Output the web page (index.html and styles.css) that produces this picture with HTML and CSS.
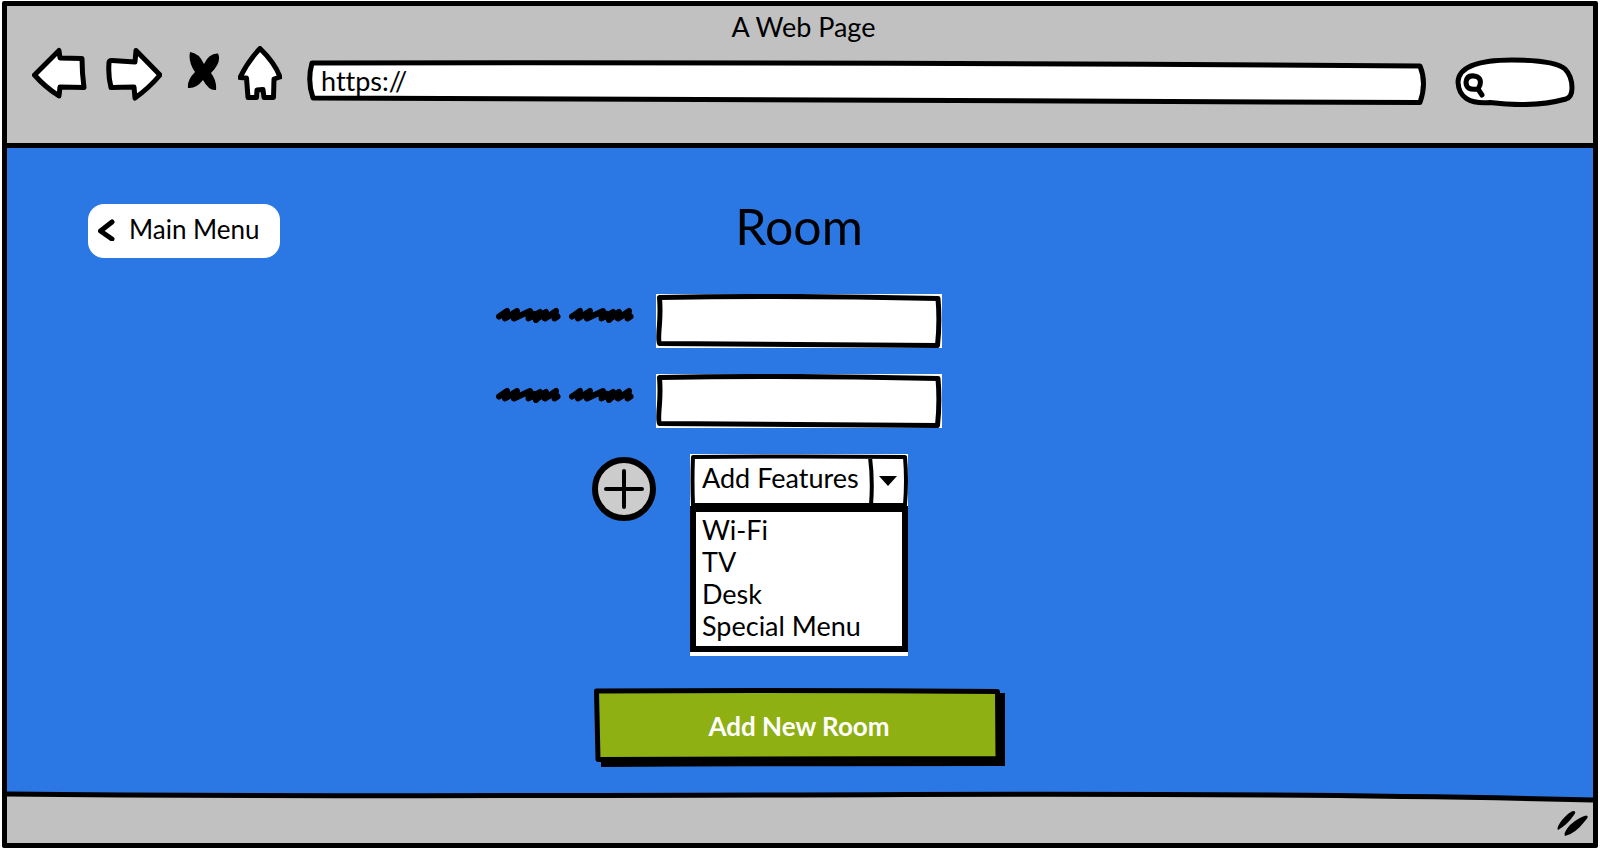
FILE: index.html
```html
<!DOCTYPE html>
<html lang="en">
<head>
<meta charset="utf-8">
<title>A Web Page</title>
<link rel="stylesheet" href="styles.css">
</head>
<body>
<svg class="defs" aria-hidden="true">
  <symbol id="scribble" viewBox="0 0 65 16">
    <path class="scrawl" d="M3 9.500 11 4 9 11.500 21 4 18 11.500 34 4 32.500 11.500 44 5 40 12.500 50 5 49 11.500 60 4 58.500 11.500 61.500 9.500"/>
    <path class="scrawl" d="M34 10 38 7 40 13 45 8 49 11 55 8"/>
  </symbol>
  <symbol id="field" viewBox="0 0 286 54" preserveAspectRatio="none">
    <path d="M3.500 3.500Q140 1 282 4.500Q284 28 281.500 51.500Q150 50 3.500 49.500Q2 47 3.500 30Q4.500 16 3.500 3.500Z"/>
  </symbol>
</svg>

<div class="browser">
  <header class="chrome">
    <div class="page-title">A Web Page</div>
    <div class="toolbar">
      <button class="tool" aria-label="Back">
        <svg class="outline" width="56" height="56" viewBox="0 0 56 56"><path d="M2.500 29 27 4.500 28 12 50 12.500Q50 27 52 41.500L28 41 27 50Q13 41 2.500 29Z"/></svg>
      </button>
      <button class="tool" aria-label="Forward">
        <svg class="outline" width="56" height="56" viewBox="0 0 56 56"><path d="M3 17Q3 14.500 6 14.500L29 16 30 4.500 54 29Q43 42 29 52L28 41Q16 41 5 41.500Q2 30 3 17Z"/></svg>
      </button>
      <button class="tool" aria-label="Stop">
        <svg width="40" height="56" viewBox="0 0 40 56"><path d="M10 6Q19 7 24 18Q29 7 38 7.500Q42 16 31 27Q37 35 36 44Q29 45 23 34Q16 43 8 42Q7 34 15 26Q8 16 10 6Z"/></svg>
      </button>
      <button class="tool" aria-label="Home">
        <svg class="outline" width="44" height="56" viewBox="0 0 44 56"><path d="M22 2.500Q37 17 42 31L36 33 35.500 51.500 26 51.500 25 43.500 19 44 18.500 51.500 10 51.500 8.500 32 2 31.500Q10 15 22 2.500Z"/></svg>
      </button>
      <div class="address">
        <svg class="frame" viewBox="0 0 1120 46" preserveAspectRatio="none" aria-hidden="true"><path d="M5 4Q560 3 1113 7Q1120 24 1113 43.500Q560 41 6 39Q0 22 5 4Z"/></svg>
        <input type="text" value="https://" aria-label="Address">
      </div>
      <div class="search">
        <svg class="frame" viewBox="0 0 120 50" aria-hidden="true"><path d="M3 25Q4 3 57 3Q100 3 110 12Q117 19 117 31Q117 40 111 42Q78 51 35 45.500Q4 48 3 25Z"/><path class="lens" d="M23 32Q11 34 11 25Q12 18 19 19Q27 20 25 28L23 32 27 38"/></svg>
        <input type="search" aria-label="Search">
      </div>
    </div>
  </header>

  <main class="page">
    <div class="heading">
      <a class="back" href="#menu">
        <svg width="18" height="24" viewBox="0 0 18 24" aria-hidden="true"><path d="M14 5 2.500 14 14 22"/></svg>
        Main Menu
      </a>
      <h1>Room</h1>
    </div>

    <form class="form">
      <label class="lead words" for="field-one" aria-label="First field">
        <svg width="65" height="16"><use href="#scribble"/></svg>
        <svg width="65" height="16"><use href="#scribble"/></svg>
      </label>
      <div class="box">
        <svg class="frame" aria-hidden="true"><use href="#field"/></svg>
        <input id="field-one" type="text">
      </div>

      <label class="lead words" for="field-two" aria-label="Second field">
        <svg width="65" height="16"><use href="#scribble"/></svg>
        <svg width="65" height="16"><use href="#scribble"/></svg>
      </label>
      <div class="box">
        <svg class="frame" aria-hidden="true"><use href="#field"/></svg>
        <input id="field-two" type="text">
      </div>

      <button class="lead plus" type="button" aria-label="Add">
        <svg width="64" height="64" viewBox="0 0 64 64"><circle cx="32" cy="32" r="29"/><path d="M32 14V50M14 32H50"/></svg>
      </button>
      <div class="features">
        <div class="combo">
          <svg class="frame" viewBox="0 0 218 52" preserveAspectRatio="none" aria-hidden="true"><path d="M3 3Q110 2 215 3Q217 26 215 51H3Q2 26 3 3ZM180 3Q183 26 181 51"/><path class="caret" d="M189 22H207L198 32Z"/></svg>
          <select aria-label="Features"><option>Add Features</option></select>
        </div>
        <ul class="options">
          <li>Wi-Fi</li>
          <li>TV</li>
          <li>Desk</li>
          <li>Special Menu</li>
        </ul>
      </div>

      <button class="submit" type="submit">
        <svg class="frame" viewBox="0 0 411 80" preserveAspectRatio="none" aria-hidden="true"><path class="shade" d="M7 6 411 5V78Q200 78 7 79Z"/><path class="face" d="M2.500 3Q200 2 403.500 3.500L404 70.500Q200 71 4 71.500Z"/></svg>
        <span>Add New Room</span>
      </button>
    </form>
  </main>

  <footer class="status">
    <svg class="rule" viewBox="0 0 1586 12" preserveAspectRatio="none" aria-hidden="true"><path class="sky" d="M0 0H1586V8Q1350 2 1000 2.500Q300 4 0 2Z"/><path class="line" d="M0 3Q300 6 900 3.500Q1300 2 1586 9"/></svg>
    <svg class="grip" width="32" height="28" viewBox="0 0 32 28" aria-hidden="true"><path d="M1 20Q-1 18 5 10Q12 2 16 1Q20 1 17 5Q10 15 1 20ZM8 26Q6 23 13 15Q22 7 29 5.500Q33 6 28 11Q18 24 8 26Z"/></svg>
  </footer>
</div>
</body>
</html>
```

FILE: styles.css
```css
* { box-sizing: border-box; }

body {
  margin: 0;
  background: #fff;
  color: #000;
  font: 27px/32px Lato, "Open Sans", sans-serif;
  font-variant-ligatures: none;
}

button, input, select {
  margin: 0;
  padding: 0;
  border: 0;
  border-radius: 0;
  background: none;
  color: inherit;
  font: inherit;
  font-variant-ligatures: none;
  outline: 0;
  appearance: none;
}

svg {
  display: block;
  fill: none;
  stroke: #000;
  stroke-width: 5px;
  stroke-linecap: round;
  stroke-linejoin: round;
}

.defs {
  position: absolute;
  width: 0;
  height: 0;
}

.scrawl { stroke-width: 6px; }

.frame {
  position: absolute;
  inset: 0;
  width: 100%;
  height: 100%;
  fill: #fff;
}

.browser {
  display: flex;
  flex-direction: column;
  min-height: calc(100vh - 3px);
  margin: 1px 2px 2px;
  border: 5px solid #000;
  border-radius: 2px;
}

/* Browser chrome */
.chrome {
  padding: 5px 18px 36px 25px;
  border-bottom: 5px solid #000;
  background: #c1c1c1;
}

.page-title {
  text-align: center;
}

.toolbar {
  display: flex;
  gap: 18px;
  align-items: flex-start;
}

.tool { padding-top: 3px; }
.tool svg { fill: #000; stroke: none; }
.tool .outline { fill: #fff; stroke: #000; }

.address {
  position: relative;
  flex: 1;
  height: 46px;
  margin: 16px 10px 0 7px;
}

.address input {
  position: relative;
  width: 100%;
  height: 42px;
  padding: 0 14px;
}

.search {
  position: relative;
  width: 120px;
  height: 50px;
  margin-top: 14px;
}

.search .lens { fill: none; }

.search input {
  position: relative;
  width: 100%;
  height: 50px;
  padding: 0 16px 0 34px;
}

/* Page */
.page {
  flex: 1;
  padding: 48px 82px 16px 80px;
  background: #2b78e4;
}

.heading {
  display: grid;
  grid-template-columns: 1fr auto 1fr;
  align-items: start;
}

.heading h1 {
  margin: 0;
  font-size: 50px;
  font-weight: 400;
  line-height: 60px;
}

.back {
  display: flex;
  gap: 13px;
  align-items: center;
  justify-self: start;
  height: 54px;
  margin: 8px 0 0 1px;
  padding: 0 20px 4px 10px;
  border-radius: 16px;
  background: #fff;
  color: #000;
  font-size: 26px;
  text-decoration: none;
}

.form {
  display: grid;
  grid-template-columns: 1fr auto 1fr;
  row-gap: 26px;
  margin-top: 36px;
}

.lead {
  grid-column: 1;
  justify-self: end;
}

.words {
  display: flex;
  gap: 8px;
  align-self: start;
  padding: 13px 22px 0 0;
}

.box {
  position: relative;
  width: 286px;
  background: #fff;
}

.box input {
  position: relative;
  display: block;
  width: 100%;
  height: 54px;
  padding: 0 14px;
}

.plus {
  align-self: start;
  margin-top: 3px;
}

.plus svg {
  fill: #ccc;
  stroke-width: 6px;
}

.plus path { stroke-width: 4px; }

.features {
  justify-self: center;
  width: 218px;
  background: #fff;
  padding-bottom: 4px;
}

.combo {
  position: relative;
}

.combo .frame { stroke-width: 4px; }
.combo .caret { fill: #000; stroke: none; }

.combo select {
  position: relative;
  display: block;
  width: 100%;
  height: 52px;
  padding: 0 0 4px 12px;
}

.options {
  margin: 0;
  padding: 2px 6px 4px;
  border: 6px solid #000;
  list-style: none;
}

.submit {
  position: relative;
  grid-column: 1 / -1;
  justify-self: center;
  width: 411px;
  height: 80px;
  margin-top: 6px;
  padding-bottom: 4px;
  color: #fff;
  font-size: 26px;
  font-weight: 700;
}

.submit span {
  position: relative;
}

.submit .face { fill: #8eb012; }
.submit .shade { fill: #000; stroke: none; }

/* Bottom bar */
.status {
  display: flex;
  flex-direction: column;
  background: #c1c1c1;
}

.rule {
  width: 100%;
  height: 12px;
}

.rule .sky { fill: #2b78e4; stroke: none; }
.rule .line { stroke-linecap: butt; }

.grip {
  align-self: flex-end;
  margin: 7px 4px 5px;
  fill: #000;
  stroke: none;
}
```
